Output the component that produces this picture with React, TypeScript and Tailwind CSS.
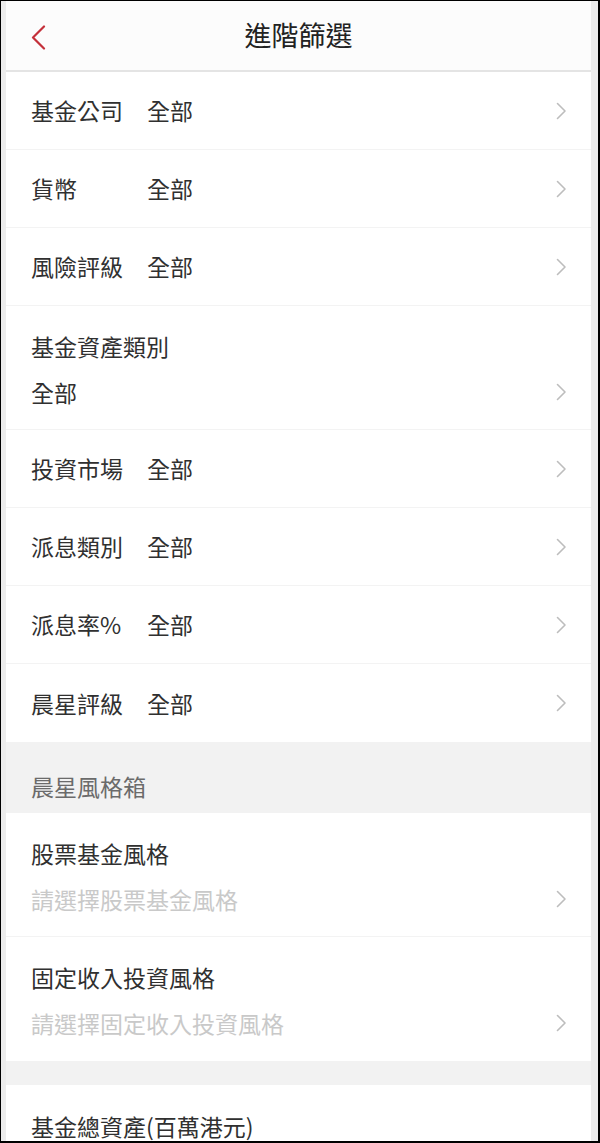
import React from "react";

const font = { fontFamily: '"Noto Sans CJK TC", "Noto Sans", sans-serif' };

const Chevron = () => (
	<svg width="11" height="18" viewBox="0 0 11 18" fill="none" className="shrink-0">
		<path d="M1.5 1.5 L9 9 L1.5 16.5" stroke="#bdbdbd" strokeWidth="1.6" strokeLinecap="round" strokeLinejoin="round" />
	</svg>
);

const inlineRows = [
	{ label: "基金公司", value: "全部" },
	{ label: "貨幣", value: "全部" },
	{ label: "風險評級", value: "全部" },
];

const inlineRows2 = [
	{ label: "投資市場", value: "全部" },
	{ label: "派息類別", value: "全部" },
	{ label: "派息率%", value: "全部" },
	{ label: "晨星評級", value: "全部" },
];

const InlineRow = ({ label, value, last }: { label: string; value: string; last?: boolean }) => (
	<div
		className={`h-[78px] shrink-0 flex items-center justify-between pl-[25px] pr-[24px] bg-white ${
			last ? "" : "border-b border-[#f3f3f3]"
		}`}>
		<div className="flex items-center text-[23px] leading-[30px] text-[#303030] -mt-[1px]">
			<span className="w-[116px]">{label}</span>
			<span>{value}</span>
		</div>
		<Chevron />
	</div>
);

const StackRow = ({
	label,
	value,
	placeholder,
	last,
}: {
	label: string;
	value: string;
	placeholder?: boolean;
	last?: boolean;
}) => (
	<div
		className={`h-[124px] shrink-0 flex flex-col pt-[25px] pl-[25px] pr-[24px] bg-white ${
			last ? "" : "border-b border-[#f3f3f3]"
		}`}>
		<span className="text-[23px] leading-[30px] text-[#303030]">{label}</span>
		<div className="flex items-center justify-between mt-[16px]">
			<span
				className={`text-[23px] leading-[30px] ${
					placeholder ? "text-[#c9c9c9]" : "text-[#303030]"
				}`}>
				{value}
			</span>
			<Chevron />
		</div>
	</div>
);

export default function App() {
	return (
		<div
			style={font}
			className="w-[600px] h-[1143px] overflow-hidden border-t border-l border-r-2 border-b-2 border-black bg-[#ececec] pl-[5px] pr-[7px]">
			<div className="h-full flex flex-col bg-[#f2f2f2]">
				{/* Header */}
				<div className="h-[71px] shrink-0 relative flex items-center justify-center bg-[#fcfcfc] border-b-2 border-[#e4e4e4]">
					<svg
						width="15"
						height="25"
						viewBox="0 0 15 25"
						fill="none"
						className="absolute left-[25px] top-[24px]">
						<path d="M13 1.5 L2 12.5 L13 23.5" stroke="#c4303a" strokeWidth="2.2" strokeLinecap="round" strokeLinejoin="round" />
					</svg>
					<span className="text-[27px] leading-[34px] text-[#222] -mt-[1px]">進階篩選</span>
				</div>

				{/* Filters */}
				{inlineRows.map((r) => (
					<InlineRow key={r.label} label={r.label} value={r.value} />
				))}
				<StackRow label="基金資產類別" value="全部" />
				{inlineRows2.map((r, i) => (
					<InlineRow key={r.label} label={r.label} value={r.value} last={i === inlineRows2.length - 1} />
				))}

				{/* Morningstar style box */}
				<div className="h-[71px] shrink-0 pt-[29px] pl-[25px] text-[23px] leading-[30px] text-[#6b6b6b]">
					晨星風格箱
				</div>
				<StackRow label="股票基金風格" value="請選擇股票基金風格" placeholder />
				<StackRow label="固定收入投資風格" value="請選擇固定收入投資風格" placeholder last />

				<div className="h-[24px] shrink-0" />
				<div className="flex-1 bg-white pt-[26px] pl-[25px]">
					<span className="text-[23px] leading-[30px] text-[#303030]">基金總資產(百萬港元)</span>
				</div>
			</div>
		</div>
	);
}
